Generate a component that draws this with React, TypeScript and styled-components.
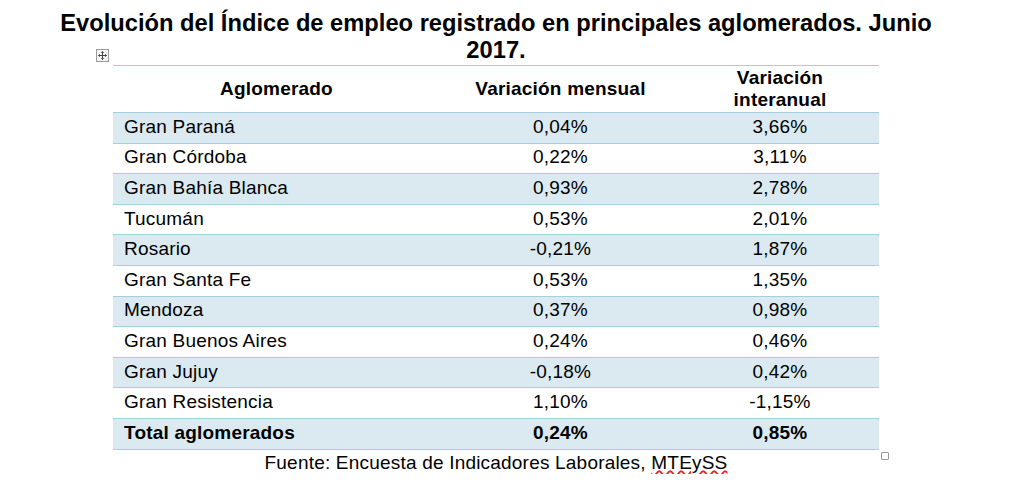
import styled, { createGlobalStyle } from 'styled-components'

const GlobalStyle = createGlobalStyle`
  html, body {
    margin: 0;
    padding: 0;
    background: #ffffff;
  }
  body {
    font-family: 'Liberation Sans', Arial, Helvetica, sans-serif;
    color: #111;
  }
`

interface RowData {
  name: string
  monthly: string
  yearly: string
}

const rows: RowData[] = [
  { name: 'Gran Paraná', monthly: '0,04%', yearly: '3,66%' },
  { name: 'Gran Córdoba', monthly: '0,22%', yearly: '3,11%' },
  { name: 'Gran Bahía Blanca', monthly: '0,93%', yearly: '2,78%' },
  { name: 'Tucumán', monthly: '0,53%', yearly: '2,01%' },
  { name: 'Rosario', monthly: '-0,21%', yearly: '1,87%' },
  { name: 'Gran Santa Fe', monthly: '0,53%', yearly: '1,35%' },
  { name: 'Mendoza', monthly: '0,37%', yearly: '0,98%' },
  { name: 'Gran Buenos Aires', monthly: '0,24%', yearly: '0,46%' },
  { name: 'Gran Jujuy', monthly: '-0,18%', yearly: '0,42%' },
  { name: 'Gran Resistencia', monthly: '1,10%', yearly: '-1,15%' },
]

const Page = styled.div`
  width: 992px;
  display: flex;
  flex-direction: column;
  align-items: center;
  padding-top: 10px;
`

const Title = styled.h1`
  margin: 0;
  max-width: 930px;
  font-size: 23.7px;
  line-height: 27px;
  font-weight: bold;
  text-align: center;
  color: #000;
`

const TableWrap = styled.div`
  position: relative;
  margin-top: 1px;
`

const MoveHandle = styled.div`
  position: absolute;
  left: -17px;
  top: -16px;
  width: 11px;
  height: 11px;
  border: 1px solid #9a9a9a;
  background: #f4f4f4;
  display: flex;
  align-items: center;
  justify-content: center;
`

const ResizeHandle = styled.div`
  position: absolute;
  right: -10px;
  bottom: -10px;
  width: 6px;
  height: 6px;
  border: 1px solid #999;
  border-radius: 1px;
  background: #fff;
`

const Table = styled.table`
  width: 766px;
  border-collapse: collapse;
  table-layout: fixed;
  border-top: 1px solid #a3cfde;
  font-size: 19px;
  letter-spacing: 0.2px;
`

const HeadCell = styled.th<{ $w: number }>`
  width: ${({ $w }) => $w}px;
  height: 46px;
  padding: 0;
  font-weight: bold;
  line-height: 22px;
  text-align: center;
  vertical-align: middle;
  border-bottom: 1px solid #a3cfde;
  color: #000;
`

const Row = styled.tr<{ $striped: boolean }>`
  background: ${({ $striped }) => ($striped ? '#dbeaf1' : '#ffffff')};
`

const Cell = styled.td<{ $align?: 'left' | 'center'; $bold?: boolean }>`
  height: 27.6px;
  padding: 0 0 2px ${({ $align }) => ($align === 'left' ? '11px' : '0')};
  text-align: ${({ $align }) => $align ?? 'center'};
  font-weight: ${({ $bold }) => ($bold ? 'bold' : 'normal')};
  border-bottom: 1px solid #a3cfde;
  line-height: 22px;
  color: #000;
`

const Source = styled.p`
  margin: 2px 0 0;
  font-size: 19px;
  line-height: 22px;
  letter-spacing: 0.2px;
  text-align: center;
  color: #000;
`

const Spell = styled.span`
  text-decoration-line: underline;
  text-decoration-style: wavy;
  text-decoration-color: #e8262a;
  text-decoration-thickness: 1.5px;
  text-underline-offset: 1px;
`

const MoveIcon = () => (
  <svg width="9" height="9" viewBox="0 0 9 9" fill="none" stroke="#444" strokeWidth="1">
    <path d="M4.5 0.5v8M0.5 4.5h8" />
    <path d="M3.3 1.7L4.5 0.5L5.7 1.7M3.3 7.3L4.5 8.5L5.7 7.3M1.7 3.3L0.5 4.5L1.7 5.7M7.3 3.3L8.5 4.5L7.3 5.7" />
  </svg>
)

export default function App() {
  return (
    <>
      <GlobalStyle />
      <Page>
        <Title>
          Evolución del Índice de empleo registrado en principales aglomerados. Junio 2017.
        </Title>
        <TableWrap>
          <MoveHandle>
            <MoveIcon />
          </MoveHandle>
          <Table>
            <thead>
              <tr>
                <HeadCell $w={327}>Aglomerado</HeadCell>
                <HeadCell $w={241}>Variación mensual</HeadCell>
                <HeadCell $w={198}>
                  Variación
                  <br />
                  interanual
                </HeadCell>
              </tr>
            </thead>
            <tbody>
              {rows.map((r, i) => (
                <Row key={r.name} $striped={i % 2 === 0}>
                  <Cell $align="left">{r.name}</Cell>
                  <Cell>{r.monthly}</Cell>
                  <Cell>{r.yearly}</Cell>
                </Row>
              ))}
              <Row $striped>
                <Cell $align="left" $bold>
                  Total aglomerados
                </Cell>
                <Cell $bold>0,24%</Cell>
                <Cell $bold>0,85%</Cell>
              </Row>
            </tbody>
          </Table>
          <ResizeHandle />
        </TableWrap>
        <Source>
          Fuente: Encuesta de Indicadores Laborales, <Spell>MTEySS</Spell>
        </Source>
      </Page>
    </>
  )
}
